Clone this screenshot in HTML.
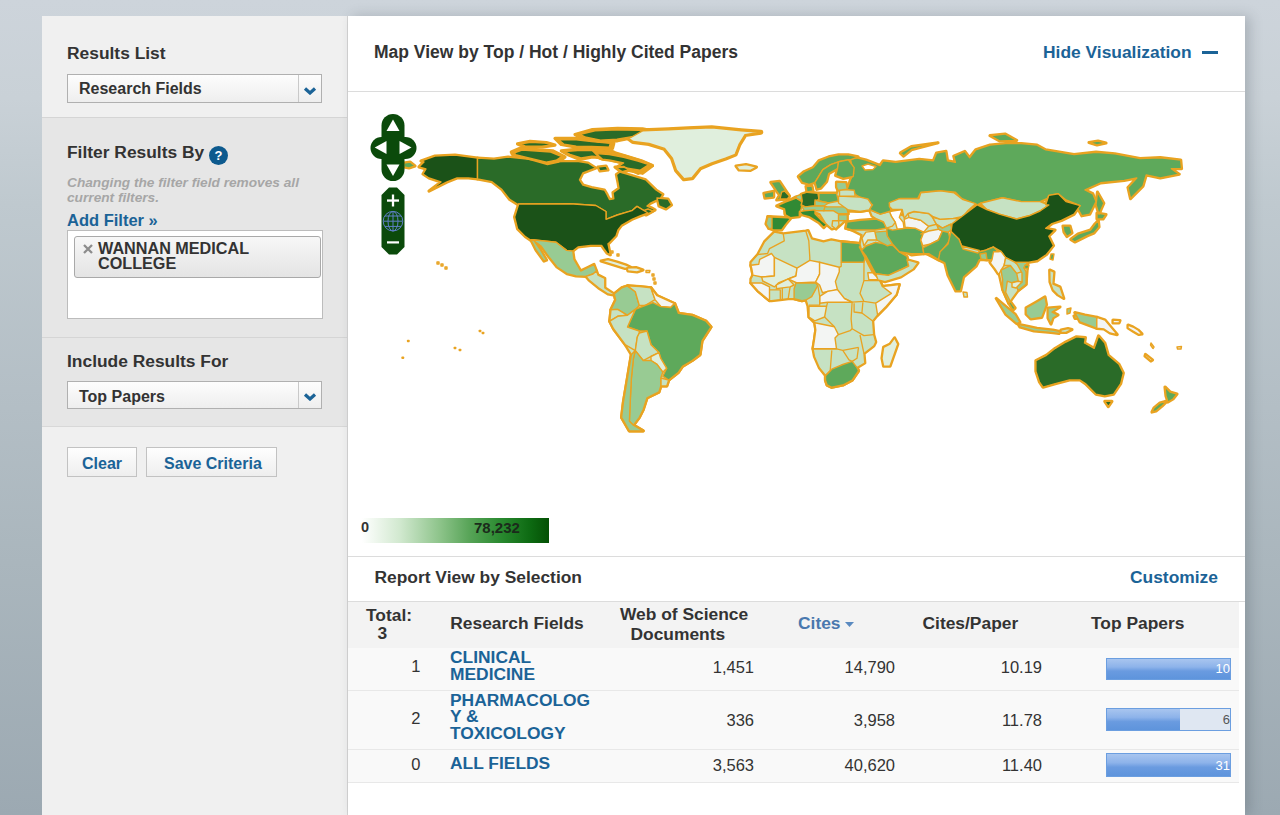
<!DOCTYPE html>
<html><head><meta charset="utf-8">
<style>
*{margin:0;padding:0;box-sizing:border-box}
html,body{width:1280px;height:815px;overflow:hidden}
body{font-family:"Liberation Sans",sans-serif;position:relative;
background:linear-gradient(180deg,#cdd4db 0%,#c9d1d7 12%,#bfc9cf 25%,#b3bec5 50%,#aab6bd 69%,#9ca9b2 100%);}
.t{position:absolute;white-space:nowrap;line-height:1}
.r{position:absolute}
</style></head>
<body>
<div class="r" style="left:42px;top:16px;width:305px;height:799px;background:#f0f0f0"></div>
<div class="r" style="left:42px;top:117px;width:305px;height:220px;background:#e6e6e6;border-top:1px solid #d5d5d5"></div>
<div class="r" style="left:42px;top:337px;width:305px;height:90px;background:#e6e6e6;border-top:1px solid #d5d5d5;border-bottom:1px solid #d8d8d8"></div>
<div class="r" style="left:347px;top:16px;width:1px;height:799px;background:#d4d4d4"></div>
<div class="t" style="left:67px;top:45.27px;font-size:17.4px;font-weight:bold;color:#333;">Results List</div>
<div class="r" style="left:67px;top:74px;width:255px;height:29px;border:1px solid #b0b0b0;background:linear-gradient(#fdfdfd,#eeeeee)"></div>
<div class="r" style="left:298px;top:75px;width:1px;height:27px;background:#c9c9c9"></div>
<div class="t" style="left:79px;top:80.86px;font-size:16px;font-weight:bold;color:#333;">Research Fields</div>
<svg class="r" style="left:303px;top:86.5px" width="14" height="8" viewBox="0 0 14 8"><path d="M2 1.5 L7 6 L12 1.5" fill="none" stroke="#1b6397" stroke-width="3.2"/></svg>
<div class="t" style="left:67px;top:143.77px;font-size:17.4px;font-weight:bold;color:#333;">Filter Results By</div>
<div class="r" style="left:209px;top:146px;width:19px;height:19px;border-radius:50%;background:#0d5a8e;color:#fff;font-size:13px;font-weight:bold;text-align:center;line-height:19px">?</div>
<div class="t" style="left:67px;top:176.00px;font-size:13.7px;font-weight:bold;color:#a6a6a6;font-style:italic">Changing the filter field removes all</div>
<div class="t" style="left:67px;top:191.00px;font-size:13.7px;font-weight:bold;color:#a6a6a6;font-style:italic">current filters.</div>
<div class="t" style="left:67px;top:212.33px;font-size:16.5px;font-weight:bold;color:#1b6397;">Add Filter »</div>
<div class="r" style="left:67px;top:230px;width:256px;height:89px;background:#fff;border:1px solid #bcbcbc"></div>
<div class="r" style="left:74px;top:236px;width:247px;height:42px;border:1px solid #a9a9a9;border-radius:3px;background:linear-gradient(#f7f7f7,#e4e4e4)"></div>
<svg class="r" style="left:82px;top:243px" width="12" height="12"><path d="M2 2 L10 10 M10 2 L2 10" stroke="#8c8c8c" stroke-width="2.3"/></svg>
<div class="t" style="left:98px;top:240.49px;font-size:16.2px;font-weight:bold;color:#333;">WANNAN MEDICAL</div>
<div class="t" style="left:98px;top:255.49px;font-size:16.2px;font-weight:bold;color:#333;">COLLEGE</div>
<div class="t" style="left:67px;top:352.77px;font-size:17.4px;font-weight:bold;color:#333;">Include Results For</div>
<div class="r" style="left:67px;top:381px;width:255px;height:28px;border:1px solid #b0b0b0;background:linear-gradient(#fdfdfd,#eeeeee)"></div>
<div class="r" style="left:298px;top:382px;width:1px;height:26px;background:#c9c9c9"></div>
<div class="t" style="left:79px;top:388.86px;font-size:16px;font-weight:bold;color:#333;">Top Papers</div>
<svg class="r" style="left:303px;top:393.0px" width="14" height="8" viewBox="0 0 14 8"><path d="M2 1.5 L7 6 L12 1.5" fill="none" stroke="#1b6397" stroke-width="3.2"/></svg>
<div class="r" style="left:67px;top:447px;width:70px;height:30px;border:1px solid #c2c2c2;background:linear-gradient(#fefefe,#eeeeee)"></div>
<div class="t" style="left:82px;top:456.26px;font-size:16px;font-weight:bold;color:#1b6397;">Clear</div>
<div class="r" style="left:146px;top:447px;width:131px;height:30px;border:1px solid #c2c2c2;background:linear-gradient(#fefefe,#eeeeee)"></div>
<div class="t" style="left:164px;top:456.26px;font-size:16px;font-weight:bold;color:#1b6397;">Save Criteria</div>
<div class="r" style="left:348px;top:16px;width:897px;height:799px;background:#fff;box-shadow:5px 0 12px rgba(50,60,70,0.22)"></div>
<div class="t" style="left:374px;top:43.89px;font-size:17.5px;font-weight:bold;color:#333;">Map View by Top / Hot / Highly Cited Papers</div>
<div class="t" style="left:1043px;top:43.67px;font-size:17.4px;font-weight:bold;color:#1b6397;">Hide Visualization</div>
<div class="r" style="left:1202px;top:51px;width:16px;height:3px;background:#1b6397"></div>
<div class="r" style="left:348px;top:91px;width:897px;height:1px;background:#dcdcdc"></div>
<div class="r" style="left:348px;top:556px;width:897px;height:1px;background:#dcdcdc"></div>
<div class="t" style="left:374.5px;top:569.07px;font-size:17.4px;font-weight:bold;color:#333;">Report View by Selection</div>
<div class="t" style="left:1130px;top:568.77px;font-size:17.4px;font-weight:bold;color:#1b6397;">Customize</div>
<div class="r" style="left:348px;top:601px;width:897px;height:1px;background:#dcdcdc"></div>
<div class="r" style="left:348px;top:602px;width:891px;height:46px;background:#f3f3f3"></div>
<div class="r" style="left:348px;top:648px;width:891px;height:134px;background:#f9f9f9"></div>
<div class="r" style="left:348px;top:690px;width:891px;height:1px;background:#e8e8e8"></div>
<div class="r" style="left:348px;top:749px;width:891px;height:1px;background:#e8e8e8"></div>
<div class="r" style="left:348px;top:782px;width:891px;height:1px;background:#e8e8e8"></div>
<div class="t" style="left:366px;top:606.77px;font-size:17.4px;font-weight:bold;color:#333;">Total:</div>
<div class="t" style="left:377.5px;top:625.27px;font-size:17.4px;font-weight:bold;color:#333;">3</div>
<div class="t" style="left:450.3px;top:614.87px;font-size:17.4px;font-weight:bold;color:#333;">Research Fields</div>
<div class="t" style="left:620px;top:606.27px;font-size:17.4px;font-weight:bold;color:#333;">Web of Science</div>
<div class="t" style="left:630.5px;top:625.57px;font-size:17.4px;font-weight:bold;color:#333;">Documents</div>
<div class="t" style="left:798px;top:614.57px;font-size:17.4px;font-weight:bold;color:#4a78ae;">Cites</div>
<svg class="r" style="left:845px;top:622px" width="10" height="6"><path d="M0 0 L9 0 L4.5 5Z" fill="#5a8ac0"/></svg>
<div class="t" style="left:922.5px;top:614.57px;font-size:17.4px;font-weight:bold;color:#333;">Cites/Paper</div>
<div class="t" style="left:1091px;top:614.57px;font-size:17.4px;font-weight:bold;color:#333;">Top Papers</div>
<div class="t" style="right:859.5px;top:658.33px;font-size:16.5px;font-weight:normal;color:#333;">1</div>
<div class="t" style="left:450px;top:649.37px;font-size:17.4px;font-weight:bold;color:#1b6397;">CLINICAL</div>
<div class="t" style="left:450px;top:665.67px;font-size:17.4px;font-weight:bold;color:#1b6397;">MEDICINE</div>
<div class="t" style="right:526px;top:659.13px;font-size:16.5px;font-weight:normal;color:#333;">1,451</div>
<div class="t" style="right:385px;top:659.13px;font-size:16.5px;font-weight:normal;color:#333;">14,790</div>
<div class="t" style="right:238px;top:659.13px;font-size:16.5px;font-weight:normal;color:#333;">10.19</div>
<div class="r" style="left:1106px;top:658px;width:125px;height:22px;border:1px solid #6b9ee0;background:#dfe7f2"></div>
<div class="r" style="left:1107px;top:659px;width:123px;height:20px;background:linear-gradient(#a8c5ef 0%,#8db3ea 40%,#6a9be0 60%,#5e94dc 100%)"></div>
<div class="t" style="right:50px;top:662.15px;font-size:13px;font-weight:normal;color:#fff;">10</div>
<div class="t" style="right:859.5px;top:709.63px;font-size:16.5px;font-weight:normal;color:#333;">2</div>
<div class="t" style="left:450px;top:692.47px;font-size:17.4px;font-weight:bold;color:#1b6397;">PHARMACOLOG</div>
<div class="t" style="left:450px;top:708.27px;font-size:17.4px;font-weight:bold;color:#1b6397;">Y &amp;</div>
<div class="t" style="left:450px;top:724.67px;font-size:17.4px;font-weight:bold;color:#1b6397;">TOXICOLOGY</div>
<div class="t" style="right:526px;top:711.53px;font-size:16.5px;font-weight:normal;color:#333;">336</div>
<div class="t" style="right:385px;top:711.53px;font-size:16.5px;font-weight:normal;color:#333;">3,958</div>
<div class="t" style="right:238px;top:711.53px;font-size:16.5px;font-weight:normal;color:#333;">11.78</div>
<div class="r" style="left:1106px;top:708px;width:125px;height:23px;border:1px solid #6b9ee0;background:#dfe7f2"></div>
<div class="r" style="left:1107px;top:709px;width:73px;height:21px;background:linear-gradient(#a8c5ef 0%,#8db3ea 40%,#6a9be0 60%,#5e94dc 100%)"></div>
<div class="t" style="right:50px;top:713.00px;font-size:13px;font-weight:normal;color:#555;">6</div>
<div class="t" style="right:859.5px;top:756.23px;font-size:16.5px;font-weight:normal;color:#333;">0</div>
<div class="t" style="left:450px;top:755.47px;font-size:17.4px;font-weight:bold;color:#1b6397;">ALL FIELDS</div>
<div class="t" style="right:526px;top:756.53px;font-size:16.5px;font-weight:normal;color:#333;">3,563</div>
<div class="t" style="right:385px;top:756.53px;font-size:16.5px;font-weight:normal;color:#333;">40,620</div>
<div class="t" style="right:238px;top:756.53px;font-size:16.5px;font-weight:normal;color:#333;">11.40</div>
<div class="r" style="left:1106px;top:753px;width:125px;height:24px;border:1px solid #6b9ee0;background:#dfe7f2"></div>
<div class="r" style="left:1107px;top:754px;width:123px;height:22px;background:linear-gradient(#a8c5ef 0%,#8db3ea 40%,#6a9be0 60%,#5e94dc 100%)"></div>
<div class="t" style="right:50px;top:758.65px;font-size:13px;font-weight:normal;color:#fff;">31</div>
<div class="r" style="left:362px;top:518px;width:187px;height:25px;background:linear-gradient(90deg,#ffffff 0%,#d2e9d0 20%,#8cc389 42%,#56a356 58%,#2a8a30 74%,#0d6a12 90%,#045004 100%)"></div>
<div class="t" style="left:361px;top:520.33px;font-size:14.5px;font-weight:bold;color:#333;">0</div>
<div class="t" style="left:474px;top:520.00px;font-size:15px;font-weight:bold;color:#1b2b1b;">78,232</div>
<svg class="r" width="1280" height="815" viewBox="0 0 1280 815" style="left:0;top:0"><g fill="#e9a321" stroke="#e9a321" stroke-width="5" stroke-linejoin="round"><path d="M629,138.5 643,130.7 668.5,129.7 688,128.7 711.7,127.8 741,130.7 760.8,132.3 745,134.6 739,144.4 735.2,154.3 725.4,158.2 711.7,163 700,168 692,177.8 684,178.8 676.4,170 672.4,158.2 664.6,148.4 649,143.5 633,141.5Z"/></g><g fill="#e9a321" stroke="#e9a321" stroke-width="3.2" stroke-linejoin="round"><path d="M421.0,161.0 435.0,156.0 455.0,155.0 477.5,158.0 477.5,179.0 468.5,178.0 457.0,178.0 447.0,182.0 439.0,186.0 429.0,191.0 441.0,182.0 429.0,178.0 423.0,174.0 426.0,169.0 419.0,167.0 424.0,162.0Z"/><path d="M404.0,163.0 410.0,162.0 415.0,166.0 409.0,168.0 404.0,167.0Z"/><path d="M477.5,158.0 494.0,159.0 508.0,157.0 527.0,159.0 547.0,162.0 563.0,161.6 578.5,161.6 588.0,163.0 595.8,168.0 582.9,172.9 579.5,179.8 582.9,185.0 591.5,187.5 604.4,190.0 607.0,194.4 609.5,199.5 613.8,198.7 613.0,192.6 619.0,188.4 618.0,182.3 616.4,174.6 620.0,172.0 630.0,175.0 645.6,179.8 656.0,190.0 662.8,194.4 660.2,198.7 655.0,201.0 650.0,203.5 647.0,206.0 651.6,208.0 655.0,210.0 651.6,211.5 648.0,213.0 637.0,206.4 631.9,210.7 617.3,215.0 606.0,219.3 606.0,211.5 595.8,205.5 570.0,203.8 518.7,204.0 517.6,204.3 509.7,199.4 502.0,189.6 492.0,181.7 477.5,179.0Z"/><path d="M598.0,167.0 606.0,166.0 608.0,170.0 600.0,171.0Z"/><path d="M640.0,212.0 648.0,209.0 653.0,211.0 646.0,215.0Z"/><path d="M657.0,198.0 668.0,199.0 671.5,205.0 666.0,209.0 659.0,206.0Z"/><path d="M610.0,151.4 625.6,156.1 641.3,160.8 652.3,165.5 644.5,170.2 638.2,173.4 628.8,168.7 619.3,167.1 624.0,162.4 613.0,157.7Z"/><path d="M511.3,152.0 520.0,148.3 536.3,149.5 552.5,150.8 565.0,157.0 558.8,162.0 547.5,164.5 530.0,159.5 512.5,154.5Z"/><path d="M514.4,152.9 522.1,150.1 536.4,151.0 550.7,152.0 561.7,156.6 556.2,160.3 546.3,162.1 530.9,158.4 515.5,154.7Z"/><path d="M517.5,143.9 530.0,141.4 546.3,142.6 555.0,145.1 542.5,147.0 523.8,146.4Z"/><path d="M519.7,144.0 530.7,142.2 545.0,143.1 552.7,144.9 541.7,146.3 525.2,145.9Z"/><path d="M555.0,138.3 575.0,138.3 592.5,140.8 613.8,143.3 612.5,148.3 592.5,147.6 575.0,147.0 561.3,144.5Z"/><path d="M558.6,139.7 576.2,139.7 591.6,141.5 610.3,143.4 609.2,147.1 591.6,146.5 576.2,146.1 564.1,144.2Z"/><path d="M575.0,134.5 592.5,129.5 617.5,128.3 642.5,128.9 655.0,131.4 636.3,137.0 617.5,140.8 598.8,142.0 582.5,138.3Z"/><path d="M579.6,134.5 595.0,130.8 617.0,129.9 639.0,130.4 650.0,132.2 633.5,136.4 617.0,139.2 600.5,140.1 586.2,137.3Z"/><path d="M561.3,150.8 580.0,148.9 605.0,149.5 613.8,152.0 607.5,158.3 592.5,157.0 580.0,159.5 567.5,154.5Z"/><path d="M564.6,151.6 581.0,150.2 603.0,150.6 610.8,152.5 605.2,157.1 592.0,156.2 581.0,158.0 570.0,154.3Z"/><path d="M592.5,150.8 607.5,152.0 623.8,155.8 640.0,160.8 652.5,165.8 642.5,173.3 630.0,170.8 617.5,168.3 623.8,163.3 608.8,159.5 600.0,158.3Z"/><path d="M596.0,153.6 609.2,154.5 623.6,157.3 637.8,161.0 648.8,164.7 640.0,170.3 629.0,168.4 618.0,166.6 623.6,162.9 610.4,160.1 602.6,159.2Z"/><path d="M615.0,167.0 624.0,166.5 630.0,170.0 622.0,172.5Z"/><path d="M615.9,167.5 623.9,167.2 629.1,169.7 622.1,171.6Z"/><path d="M518.7,204.0 570.0,203.8 595.8,205.5 606.0,211.5 606.0,219.3 617.3,215.0 631.9,210.7 637.0,206.4 648.0,213.0 640.0,216.0 631.9,219.3 621.5,225.3 618.0,230.0 616.0,236.0 609.6,242.6 608.0,243.8 610.3,254.8 607.0,253.0 603.7,248.5 601.6,245.4 590.7,245.4 578.0,247.0 571.8,251.7 566.6,250.4 556.1,242.3 533.0,239.6 531.3,240.6 525.4,236.7 517.6,228.8 514.6,217.0Z"/><path d="M531.0,239.6 556.1,242.3 566.6,250.4 572.8,251.0 574.0,259.3 580.7,271.0 588.6,267.1 594.0,264.5 596.5,271.0 593.0,274.0 586.0,276.4 576.0,276.0 567.0,273.7 557.0,267.0 549.0,257.0 541.0,246.0 537.0,243.0Z"/><path d="M531.0,240.0 534.0,240.5 540.0,249.0 546.5,260.0 544.0,261.0 536.0,250.0Z"/><path d="M586.0,276.4 593.0,274.0 596.5,271.0 598.0,275.0 604.8,278.4 604.8,287.8 614.2,294.0 617.3,295.7 608.0,294.0 598.5,287.8 589.0,280.0Z"/><path d="M601.0,261.0 608.0,259.5 617.0,262.0 626.0,265.0 631.0,267.5 625.0,268.5 617.0,266.0 609.0,263.5Z"/><path d="M627.0,268.0 636.0,267.5 643.0,270.0 637.0,272.0 628.0,271.0Z"/><path d="M629.0,138.5 643.0,130.7 668.5,129.7 688.0,128.7 711.7,127.8 741.0,130.7 760.8,132.3 745.0,134.6 739.0,144.4 735.2,154.3 725.4,158.2 711.7,163.0 700.0,168.0 692.0,177.8 684.0,178.8 676.4,170.0 672.4,158.2 664.6,148.4 649.0,143.5 633.0,141.5Z"/><path d="M736.0,166.0 746.0,164.5 756.5,167.0 750.0,170.5 739.0,170.0Z"/><path d="M614.2,294.0 622.0,287.8 627.5,285.9 651.0,287.9 657.0,295.7 674.6,303.6 678.5,313.4 692.2,315.3 706.0,321.2 711.0,327.0 702.0,340.8 700.0,354.6 692.2,360.5 682.4,366.4 678.5,372.2 668.7,380.0 666.7,386.0 660.8,386.0 658.9,392.0 647.0,397.8 643.2,409.5 639.3,417.4 633.4,425.2 643.2,431.0 629.4,431.0 621.6,417.4 623.5,401.7 627.5,378.0 631.4,354.6 625.5,344.8 613.7,329.0 609.8,321.2 611.0,309.8 615.7,300.0Z"/><path d="M614.2,294.0 622.0,287.8 627.5,285.9 635.3,291.8 639.3,305.5 635.3,309.4 627.5,315.3 617.7,309.4 611.0,309.8 615.7,300.0Z"/><path d="M627.5,285.9 640.0,286.5 651.0,287.9 655.0,299.6 645.0,305.5 639.3,305.5 635.3,291.8Z"/><path d="M651.0,287.9 657.0,295.7 674.6,303.6 670.7,307.5 660.8,306.5 655.0,299.6Z"/><path d="M609.8,321.2 611.0,309.8 617.7,309.4 627.5,315.3 617.7,316.3Z"/><path d="M627.5,327.0 635.3,309.4 645.0,305.5 653.0,302.6 660.8,306.5 670.7,307.5 674.6,303.6 678.5,313.4 692.2,315.3 706.0,321.2 711.0,327.0 702.0,340.8 700.0,354.6 692.2,360.5 682.4,366.4 678.5,372.2 668.7,380.0 662.8,376.2 666.7,368.3 660.8,358.5 658.9,352.6 651.0,344.8 647.0,331.0 639.3,331.0Z"/><path d="M609.8,321.2 617.7,316.3 627.5,315.3 635.3,309.4 627.5,327.0 639.3,331.0 639.3,333.0 637.3,337.0 635.3,350.6 625.5,344.8 613.7,329.0Z"/><path d="M637.3,337.0 639.3,333.0 647.0,331.0 651.0,344.8 658.9,352.6 651.0,356.5 643.2,360.5 635.3,350.6Z"/><path d="M651.0,356.5 658.9,352.6 660.8,358.5 666.7,368.3 662.8,372.2 657.0,364.4 651.0,360.5Z"/><path d="M660.8,378.0 668.7,380.0 666.7,386.0 660.8,386.0Z"/><path d="M635.3,350.6 643.2,360.5 651.0,360.5 657.0,364.4 662.8,372.2 660.8,378.0 660.8,386.0 658.9,392.0 647.0,397.8 643.2,409.5 639.3,417.4 633.4,425.2 629.4,421.3 630.4,397.8 631.4,378.0 633.4,358.5Z"/><path d="M635.3,350.6 633.4,358.5 631.4,378.0 630.4,397.8 629.4,421.3 633.4,425.2 643.2,431.0 629.4,431.0 621.6,417.4 623.5,401.7 627.5,378.0 631.4,354.6Z"/><path d="M774.4,232.0 783.3,233.9 805.8,231.0 808.0,230.5 811.7,238.8 823.5,241.7 831.4,239.8 841.2,241.7 862.5,243.8 859.3,247.0 865.0,258.0 868.8,266.0 872.7,272.8 879.6,279.7 882.5,286.5 899.2,284.6 896.3,294.4 885.5,307.1 877.6,315.0 872.7,320.9 873.7,334.6 875.7,342.0 874.0,345.7 864.0,353.6 864.8,363.0 857.0,367.7 858.5,370.8 852.2,380.2 842.8,385.0 831.8,387.3 827.1,385.0 825.5,380.2 825.5,375.5 819.3,367.7 814.5,356.7 813.0,348.8 814.5,339.4 815.8,330.0 814.8,322.8 809.0,317.0 808.0,306.0 806.0,300.0 801.9,300.6 794.1,298.7 788.2,298.7 780.3,299.6 771.5,300.6 769.5,300.6 757.8,290.8 750.9,283.0 750.9,279.0 752.9,275.1 751.9,269.2 750.9,265.3 750.9,262.3 757.8,254.5 764.6,241.7Z"/><path d="M750.9,265.3 758.7,264.3 759.7,259.4 771.5,253.5 774.4,257.4 774.4,276.0 761.7,277.0 752.9,275.1 751.9,269.2Z"/><path d="M774.4,257.4 797.0,268.2 796.0,276.0 788.2,279.0 778.4,283.0 774.4,286.9 762.7,281.0 761.7,277.0 774.4,276.0Z"/><path d="M797.0,268.2 809.8,260.4 819.6,262.3 819.6,274.1 815.7,282.0 797.0,283.0 788.2,279.0 796.0,276.0Z"/><path d="M819.6,262.3 839.2,267.3 839.3,271.8 835.4,281.6 837.4,289.5 833.3,290.8 827.6,291.4 822.5,292.8 819.6,285.0 815.7,282.0 819.6,274.1Z"/><path d="M776.4,285.0 788.2,279.0 794.1,285.0 790.1,286.9 782.3,287.9 776.4,288.8Z"/><path d="M796.0,283.0 815.7,283.0 817.8,285.5 811.7,296.7 806.0,300.0 801.9,300.6 794.1,298.7 794.1,288.8Z"/><path d="M750.9,283.0 761.7,283.0 769.5,286.9 769.5,300.6 757.8,290.8Z"/><path d="M819.7,296.3 827.6,291.4 837.4,289.5 844.3,298.3 852.1,302.2 827.6,302.2 819.7,303.2Z"/><path d="M809.0,306.2 826.6,306.2 824.6,317.0 814.8,320.9 809.0,317.0Z"/><path d="M814.8,322.8 824.6,324.8 834.4,326.8 838.4,334.6 835.0,337.9 836.5,348.8 813.0,348.8 814.5,339.4 815.8,330.0Z"/><path d="M867.8,272.8 872.7,272.8 879.6,279.7 868.8,279.7Z"/><path d="M882.5,286.5 899.2,284.6 896.3,294.4 885.5,307.1 877.6,315.0 875.7,303.2 891.4,293.4Z"/><path d="M841.2,241.7 862.5,243.8 859.3,247.0 865.0,258.0 864.0,262.3 841.2,262.3Z"/><path d="M825.5,375.5 831.8,369.2 842.8,364.5 852.2,361.4 857.0,367.7 858.5,370.8 852.2,380.2 842.8,385.0 831.8,387.3 827.1,385.0 825.5,380.2Z"/><path d="M894.6,337.9 897.8,344.1 890.0,366.1 883.6,366.1 882.0,358.3 883.6,347.3 890.0,344.1Z"/><path d="M785.0,203.0 796.0,197.0 818.0,193.5 837.0,193.5 839.0,189.0 856.0,189.0 857.0,196.0 868.0,199.0 872.0,205.0 869.0,210.0 860.0,211.5 848.0,211.0 846.0,214.0 845.8,220.0 838.0,227.0 832.0,229.0 826.0,224.0 820.0,214.0 815.0,212.0 803.0,211.0 800.0,216.0 790.0,216.0 785.0,214.0Z"/><path d="M847.0,222.0 880.0,220.5 892.0,220.0 891.0,211.0 903.0,215.8 911.0,212.6 927.0,214.2 942.8,222.0 952.0,223.6 951.0,231.4 948.0,244.0 940.0,251.8 938.5,259.7 926.0,253.4 924.4,253.4 911.8,255.0 902.4,250.2 891.4,244.0 880.4,245.5 875.7,242.4 866.0,246.0 861.6,250.2 860.0,244.0 862.0,235.0 852.0,230.0 845.8,228.3Z"/><path d="M990.0,248.0 1005.0,257.0 1015.0,262.0 1027.7,262.4 1026.0,284.0 1018.0,290.6 1010.0,301.6 1008.8,303.2 1002.6,289.0 999.0,273.0 990.0,262.0Z"/><path d="M861.6,250.2 866.0,246.0 875.7,242.4 893.0,245.5 899.3,251.8 907.1,256.5 908.7,266.0 902.4,269.0 888.3,275.4 875.7,273.8 866.3,256.5Z"/><path d="M875.7,273.8 888.3,275.4 902.4,269.0 908.7,266.0 907.0,259.7 918.0,262.8 913.4,269.0 900.8,277.0 885.0,281.6 878.0,280.0Z"/><path d="M874.7,232.1 886.5,231.1 887.5,236.0 892.4,243.9 887.5,245.8 876.7,240.0Z"/><path d="M865.9,232.1 874.7,231.1 876.7,240.0 867.9,240.0 863.9,245.8 862.0,238.0Z"/><path d="M886.5,228.2 892.4,230.1 905.1,228.2 915.0,228.2 923.8,232.1 920.8,240.0 922.8,247.8 923.8,253.7 911.0,253.7 899.3,251.7 892.4,243.9 887.5,236.0Z"/><path d="M847.0,222.0 860.0,220.3 876.7,219.0 883.6,222.0 886.5,228.2 875.6,230.0 852.0,230.0 845.8,228.3Z"/><path d="M869.3,209.5 880.3,214.2 889.4,211.5 891.4,216.4 895.3,222.3 892.4,226.2 886.5,228.2 883.6,222.0 876.7,219.0 872.0,216.0Z"/><path d="M904.2,219.3 909.0,217.4 920.8,220.3 928.7,226.2 923.8,232.1 915.0,228.2 905.1,227.2Z"/><path d="M908.1,213.5 914.0,211.5 928.7,213.5 932.6,217.4 936.5,224.3 928.7,226.2 920.8,220.3 909.0,217.4Z"/><path d="M920.8,234.0 928.7,231.0 938.5,229.2 942.4,231.1 938.5,240.0 930.7,243.9 922.8,245.8 920.8,240.0 923.8,232.1Z"/><path d="M922.8,247.8 930.7,243.9 938.5,240.0 942.4,231.1 948.3,232.1 950.3,240.0 943.4,248.8 940.5,253.7 938.5,259.6 928.7,253.7 923.8,253.7Z"/><path d="M932.6,217.4 940.5,219.3 953.2,218.4 958.0,219.0 954.0,224.0 950.3,224.3 942.4,228.2 936.5,224.3Z"/><path d="M936.5,224.3 942.4,228.2 950.3,224.3 952.0,229.0 948.3,232.1 942.4,231.1 938.5,229.2Z"/><path d="M850.5,159.3 856.8,157.7 866.0,160.0 880.0,165.5 883.1,160.8 895.7,162.4 919.3,159.3 933.4,160.8 936.5,153.0 946.0,151.4 947.5,160.8 955.4,162.4 953.8,156.1 964.8,151.4 969.5,157.7 975.8,149.8 990.0,145.1 1005.6,143.5 1021.3,143.5 1037.0,145.1 1045.7,149.8 1074.0,154.5 1096.0,152.2 1114.8,153.8 1140.0,158.5 1160.3,157.7 1180.7,160.0 1181.5,168.7 1171.3,168.7 1179.2,174.2 1160.3,178.0 1146.2,175.0 1143.0,186.0 1130.5,198.5 1128.0,187.5 1136.8,178.0 1124.2,180.4 1100.7,182.8 1085.0,189.9 1092.8,193.8 1096.0,201.6 1089.7,214.2 1081.8,215.8 1077.0,207.1 1080.2,205.6 1066.0,200.0 1058.3,193.8 1048.8,195.4 1047.3,198.5 1040.0,201.6 1021.3,201.6 1002.5,197.7 980.5,203.2 977.3,204.8 961.6,198.5 955.4,192.2 939.7,190.7 920.8,192.2 917.7,198.5 900.4,198.5 889.4,203.2 891.0,211.0 880.3,214.2 869.3,209.5 872.5,204.8 856.8,195.4 847.3,189.0 850.5,179.7 853.6,173.4Z"/><path d="M900.4,153.0 911.4,146.7 938.0,142.8 911.4,149.8 903.6,156.1Z"/><path d="M990.0,135.7 1005.0,134.0 1016.6,140.4 1000.0,141.0Z"/><path d="M1089.0,142.5 1098.0,141.0 1106.0,143.0 1097.0,145.0Z"/><path d="M889.4,202.7 899.3,198.7 918.9,198.7 920.8,192.9 940.5,190.9 954.2,192.9 963.0,199.7 975.8,203.6 968.0,210.5 963.0,216.4 953.2,218.4 940.5,219.3 932.6,216.4 928.7,213.5 914.0,211.5 908.1,213.5 904.2,218.4 902.2,209.5 892.4,209.5 889.4,206.6Z"/><path d="M980.5,203.2 1002.5,197.7 1021.3,201.6 1040.0,201.6 1048.8,205.0 1040.0,211.0 1029.0,215.8 1016.6,219.0 999.3,214.2 986.8,209.5Z"/><path d="M952.2,223.6 964.8,214.2 977.3,204.8 986.8,209.5 999.3,214.2 1016.6,219.0 1029.0,215.8 1040.0,211.0 1048.8,205.0 1045.7,204.8 1048.8,195.4 1058.3,193.8 1066.0,201.6 1080.2,205.6 1074.0,214.2 1061.4,220.5 1052.0,223.6 1045.7,228.3 1055.0,230.0 1048.8,236.2 1053.5,245.6 1046.5,254.5 1037.1,260.8 1027.7,262.4 1015.1,262.4 1005.7,257.7 1001.0,251.4 993.5,247.0 985.6,250.2 979.3,251.8 962.0,247.0 959.0,239.3 951.0,231.4Z"/><path d="M951.0,231.4 959.0,239.3 962.0,247.0 979.3,251.8 985.6,250.2 993.5,247.0 998.2,251.8 992.0,259.7 979.3,259.7 976.2,266.0 963.6,277.0 960.5,291.0 955.8,291.0 948.0,275.4 944.8,262.8 938.5,259.7 940.0,251.8 948.0,244.0Z"/><path d="M962.0,246.0 979.3,250.5 978.0,253.0 963.0,249.0Z"/><path d="M980.0,254.0 986.0,253.0 987.0,260.0 981.0,259.0Z"/><path d="M993.5,251.8 998.2,251.8 1001.0,251.4 1005.7,257.7 1004.1,265.5 1001.0,270.2 999.4,273.4 998.2,273.8 995.0,269.0 990.3,262.8 992.0,259.7Z"/><path d="M1001.0,270.2 1010.4,265.5 1016.7,273.4 1018.3,281.2 1012.0,282.8 1007.3,281.2 1005.7,292.2 1010.4,301.6 1008.8,303.2 1002.6,289.0 1002.6,279.7Z"/><path d="M1005.7,257.7 1015.1,262.4 1017.0,264.0 1024.0,271.0 1016.7,273.4 1010.4,265.5 1004.1,265.5Z"/><path d="M1015.1,262.4 1027.7,262.4 1024.0,268.0 1026.1,271.8 1026.1,284.4 1018.3,290.6 1016.0,286.0 1022.0,282.0 1022.0,273.0 1017.0,264.0Z"/><path d="M1012.0,282.8 1018.3,281.2 1022.0,282.0 1016.0,288.0 1012.0,287.0Z"/><path d="M1008.8,303.2 1010.4,301.6 1015.1,308.0 1013.0,310.0Z"/><path d="M996.3,298.5 1005.7,306.4 1015.1,314.2 1019.8,322.0 1016.7,323.6 1005.7,314.2Z"/><path d="M1018.3,324.4 1037.0,328.3 1052.8,330.0 1060.0,331.5 1059.0,333.5 1051.0,332.5 1034.0,331.0 1020.0,327.0Z"/><path d="M1061.0,330.0 1068.0,328.5 1072.0,329.5 1066.0,332.5 1061.0,332.5Z"/><path d="M1074.0,316.0 1082.0,315.5 1083.0,318.0 1075.0,318.5Z"/><path d="M1128.0,325.0 1133.0,327.0 1138.0,330.0 1142.0,334.0 1139.0,334.5 1133.0,331.0 1128.0,328.0Z"/><path d="M1113.0,320.0 1120.0,320.5 1119.0,323.0 1113.0,323.0Z"/><path d="M1145.5,354.5 1152.5,360.0 1151.0,361.0 1145.0,356.0Z"/><path d="M1026.1,308.0 1037.1,301.6 1045.0,297.0 1046.5,304.8 1041.8,317.3 1030.8,319.0 1026.1,314.2Z"/><path d="M1048.0,308.0 1060.0,307.0 1052.0,312.0 1058.0,315.0 1053.0,318.0 1051.0,324.0 1048.0,318.0Z"/><path d="M1049.7,270.0 1054.0,272.0 1053.0,284.0 1060.0,287.0 1063.8,298.5 1058.0,295.0 1053.0,290.0 1050.0,282.0Z"/><path d="M1074.8,312.6 1085.0,315.0 1096.8,317.3 1096.8,328.3 1088.0,325.0 1080.0,322.0Z"/><path d="M1096.8,317.3 1105.0,320.0 1110.0,326.0 1117.2,334.6 1110.0,333.0 1104.0,329.0 1096.8,328.3Z"/><path d="M1070.8,239.3 1078.0,234.1 1090.5,230.0 1095.0,224.0 1098.3,220.5 1099.0,227.0 1094.0,233.0 1087.3,235.7 1074.8,242.0Z"/><path d="M1097.0,213.0 1106.0,214.5 1103.0,219.0 1097.0,219.0Z"/><path d="M1063.0,226.0 1070.0,226.0 1072.0,233.0 1067.0,236.5 1064.0,232.0Z"/><path d="M1097.5,192.2 1103.8,203.2 1099.0,214.2 1096.0,204.8Z"/><path d="M1035.9,360.6 1046.5,355.3 1055.3,348.3 1066.0,342.0 1076.5,336.8 1085.4,337.7 1084.5,343.0 1094.2,348.3 1098.6,335.9 1104.8,343.0 1108.3,355.3 1118.9,364.2 1123.3,373.0 1120.7,383.6 1113.6,394.2 1104.8,396.0 1096.0,394.2 1088.9,387.1 1085.4,383.6 1080.0,380.0 1069.5,380.0 1055.3,383.6 1043.0,387.1 1039.4,381.8 1035.9,371.2Z"/><path d="M1104.8,401.3 1111.9,401.3 1108.3,406.6Z"/><path d="M1165.0,387.0 1170.0,392.0 1177.0,394.0 1173.0,399.0 1168.0,402.0 1166.0,396.0Z"/><path d="M1167.0,401.0 1162.0,406.0 1156.0,411.0 1152.0,412.0 1154.0,408.0 1160.0,403.0Z"/><path d="M798.3,176.5 804.2,171.6 813.0,167.7 818.9,160.8 828.7,156.9 838.5,154.9 848.3,154.9 858.1,156.9 850.3,159.8 838.5,161.8 830.7,164.7 822.8,169.6 815.0,182.4 809.1,184.3 802.2,182.4Z"/><path d="M815.0,182.4 822.8,169.6 830.7,164.7 838.5,161.8 837.5,168.6 828.7,173.6 826.7,181.4 820.8,188.3 816.9,189.3Z"/><path d="M838.5,161.8 848.3,159.8 854.2,167.7 853.2,176.5 843.4,178.5 835.6,175.5 837.5,168.6Z"/><path d="M806.0,186.5 812.0,186.0 813.0,191.0 807.0,192.0Z"/><path d="M770.8,182.4 779.6,181.4 783.6,187.3 789.4,196.1 787.5,199.0 776.7,200.0 779.6,195.1 776.7,191.2Z"/><path d="M781.6,192.2 784.5,191.0 789.4,196.1 787.5,199.0 780.0,199.0Z"/><path d="M763.9,193.2 773.7,191.2 773.7,197.1 764.9,198.1Z"/><path d="M776.7,206.0 785.5,202.0 796.3,198.1 802.2,202.0 801.2,208.9 799.3,212.8 799.3,216.7 790.4,217.7 785.5,214.8 784.5,208.9Z"/><path d="M801.2,194.2 807.1,192.2 817.9,193.2 818.9,199.0 815.0,202.0 815.0,205.9 805.1,206.9 801.2,205.0 802.2,201.0Z"/><path d="M818.9,193.2 836.5,193.2 838.5,201.0 828.7,203.0 818.9,201.0Z"/><path d="M815.0,200.0 818.9,201.0 828.7,203.0 823.8,206.0 817.0,206.0 815.0,205.9Z"/><path d="M801.2,205.0 805.1,206.9 815.0,205.9 817.0,206.0 823.8,206.0 826.7,206.9 823.8,210.8 804.2,210.8Z"/><path d="M799.3,211.8 804.2,210.8 815.0,209.9 815.0,213.8 821.8,220.7 826.7,224.6 823.8,227.5 818.9,222.6 809.1,216.7 802.2,214.8Z"/><path d="M767.9,216.7 787.5,217.7 790.4,218.7 785.5,224.6 781.6,230.0 773.5,230.0 768.8,228.3Z"/><path d="M767.9,216.7 772.0,217.3 772.0,228.5 768.8,228.3 766.0,224.0Z"/><path d="M824.8,206.9 833.6,206.9 834.6,206.9 846.4,206.9 848.3,213.8 838.5,213.8 833.6,210.8 823.8,210.8Z"/><path d="M838.5,196.1 860.0,197.1 868.0,199.0 872.0,205.0 869.0,210.0 860.0,211.5 848.3,210.0 838.5,203.0Z"/><path d="M839.5,189.3 854.2,190.2 855.2,196.1 839.5,196.1Z"/><path d="M836.5,182.0 846.0,182.5 847.3,189.3 838.0,190.5 836.5,187.0Z"/><path d="M838.5,214.8 847.3,214.8 847.3,220.7 838.5,220.7Z"/><path d="M832.6,220.7 838.5,220.7 839.0,225.0 836.0,229.0 832.0,226.0Z"/></g><g stroke="#e9a321" stroke-width="1.4" stroke-linejoin="round"><path fill="#1b5218" d="M421.0,161.0 435.0,156.0 455.0,155.0 477.5,158.0 477.5,179.0 468.5,178.0 457.0,178.0 447.0,182.0 439.0,186.0 429.0,191.0 441.0,182.0 429.0,178.0 423.0,174.0 426.0,169.0 419.0,167.0 424.0,162.0Z"/><path fill="#5ea95b" d="M404.0,163.0 410.0,162.0 415.0,166.0 409.0,168.0 404.0,167.0Z"/><path fill="#2a6b28" d="M477.5,158.0 494.0,159.0 508.0,157.0 527.0,159.0 547.0,162.0 563.0,161.6 578.5,161.6 588.0,163.0 595.8,168.0 582.9,172.9 579.5,179.8 582.9,185.0 591.5,187.5 604.4,190.0 607.0,194.4 609.5,199.5 613.8,198.7 613.0,192.6 619.0,188.4 618.0,182.3 616.4,174.6 620.0,172.0 630.0,175.0 645.6,179.8 656.0,190.0 662.8,194.4 660.2,198.7 655.0,201.0 650.0,203.5 647.0,206.0 651.6,208.0 655.0,210.0 651.6,211.5 648.0,213.0 637.0,206.4 631.9,210.7 617.3,215.0 606.0,219.3 606.0,211.5 595.8,205.5 570.0,203.8 518.7,204.0 517.6,204.3 509.7,199.4 502.0,189.6 492.0,181.7 477.5,179.0Z"/><path fill="#2a6b28" d="M598.0,167.0 606.0,166.0 608.0,170.0 600.0,171.0Z"/><path fill="#2a6b28" d="M640.0,212.0 648.0,209.0 653.0,211.0 646.0,215.0Z"/><path fill="#2a6b28" d="M657.0,198.0 668.0,199.0 671.5,205.0 666.0,209.0 659.0,206.0Z"/><path fill="#2a6b28" d="M610.0,151.4 625.6,156.1 641.3,160.8 652.3,165.5 644.5,170.2 638.2,173.4 628.8,168.7 619.3,167.1 624.0,162.4 613.0,157.7Z"/><path fill="#e8a21f" d="M511.3,152.0 520.0,148.3 536.3,149.5 552.5,150.8 565.0,157.0 558.8,162.0 547.5,164.5 530.0,159.5 512.5,154.5Z"/><path fill="#2a6b28" d="M514.4,152.9 522.1,150.1 536.4,151.0 550.7,152.0 561.7,156.6 556.2,160.3 546.3,162.1 530.9,158.4 515.5,154.7Z"/><path fill="#e8a21f" d="M517.5,143.9 530.0,141.4 546.3,142.6 555.0,145.1 542.5,147.0 523.8,146.4Z"/><path fill="#2a6b28" d="M519.7,144.0 530.7,142.2 545.0,143.1 552.7,144.9 541.7,146.3 525.2,145.9Z"/><path fill="#e8a21f" d="M555.0,138.3 575.0,138.3 592.5,140.8 613.8,143.3 612.5,148.3 592.5,147.6 575.0,147.0 561.3,144.5Z"/><path fill="#2a6b28" d="M558.6,139.7 576.2,139.7 591.6,141.5 610.3,143.4 609.2,147.1 591.6,146.5 576.2,146.1 564.1,144.2Z"/><path fill="#e8a21f" d="M575.0,134.5 592.5,129.5 617.5,128.3 642.5,128.9 655.0,131.4 636.3,137.0 617.5,140.8 598.8,142.0 582.5,138.3Z"/><path fill="#2a6b28" d="M579.6,134.5 595.0,130.8 617.0,129.9 639.0,130.4 650.0,132.2 633.5,136.4 617.0,139.2 600.5,140.1 586.2,137.3Z"/><path fill="#e8a21f" d="M561.3,150.8 580.0,148.9 605.0,149.5 613.8,152.0 607.5,158.3 592.5,157.0 580.0,159.5 567.5,154.5Z"/><path fill="#2a6b28" d="M564.6,151.6 581.0,150.2 603.0,150.6 610.8,152.5 605.2,157.1 592.0,156.2 581.0,158.0 570.0,154.3Z"/><path fill="#e8a21f" d="M592.5,150.8 607.5,152.0 623.8,155.8 640.0,160.8 652.5,165.8 642.5,173.3 630.0,170.8 617.5,168.3 623.8,163.3 608.8,159.5 600.0,158.3Z"/><path fill="#2a6b28" d="M596.0,153.6 609.2,154.5 623.6,157.3 637.8,161.0 648.8,164.7 640.0,170.3 629.0,168.4 618.0,166.6 623.6,162.9 610.4,160.1 602.6,159.2Z"/><path fill="#e8a21f" d="M615.0,167.0 624.0,166.5 630.0,170.0 622.0,172.5Z"/><path fill="#2a6b28" d="M615.9,167.5 623.9,167.2 629.1,169.7 622.1,171.6Z"/><path fill="#1b5218" d="M518.7,204.0 570.0,203.8 595.8,205.5 606.0,211.5 606.0,219.3 617.3,215.0 631.9,210.7 637.0,206.4 648.0,213.0 640.0,216.0 631.9,219.3 621.5,225.3 618.0,230.0 616.0,236.0 609.6,242.6 608.0,243.8 610.3,254.8 607.0,253.0 603.7,248.5 601.6,245.4 590.7,245.4 578.0,247.0 571.8,251.7 566.6,250.4 556.1,242.3 533.0,239.6 531.3,240.6 525.4,236.7 517.6,228.8 514.6,217.0Z"/><path fill="#98cb93" d="M531.0,239.6 556.1,242.3 566.6,250.4 572.8,251.0 574.0,259.3 580.7,271.0 588.6,267.1 594.0,264.5 596.5,271.0 593.0,274.0 586.0,276.4 576.0,276.0 567.0,273.7 557.0,267.0 549.0,257.0 541.0,246.0 537.0,243.0Z"/><path fill="#98cb93" d="M531.0,240.0 534.0,240.5 540.0,249.0 546.5,260.0 544.0,261.0 536.0,250.0Z"/><path fill="#c6e2c3" d="M586.0,276.4 593.0,274.0 596.5,271.0 598.0,275.0 604.8,278.4 604.8,287.8 614.2,294.0 617.3,295.7 608.0,294.0 598.5,287.8 589.0,280.0Z"/><path fill="#e0efdd" d="M601.0,261.0 608.0,259.5 617.0,262.0 626.0,265.0 631.0,267.5 625.0,268.5 617.0,266.0 609.0,263.5Z"/><path fill="#e0efdd" d="M627.0,268.0 636.0,267.5 643.0,270.0 637.0,272.0 628.0,271.0Z"/><path fill="#e0efdd" d="M646.0,270.5 650.0,270.5 649.5,272.5 646.0,272.5Z"/><path fill="#e0efdd" d="M652.0,274.0 654.0,274.0 654.0,276.0 652.0,276.0Z"/><path fill="#e0efdd" d="M653.0,278.0 655.0,278.0 655.0,280.0 653.0,280.0Z"/><path fill="#e0efdd" d="M654.0,282.0 656.0,282.0 656.0,284.0 654.0,284.0Z"/><path fill="#e0efdd" d="M437.0,262.0 439.0,262.0 439.0,264.0 437.0,264.0Z"/><path fill="#e0efdd" d="M441.0,264.0 443.0,264.0 443.0,266.0 441.0,266.0Z"/><path fill="#e0efdd" d="M445.0,267.0 447.0,267.0 447.0,269.0 445.0,269.0Z"/><path fill="#e0efdd" d="M611.0,251.0 613.0,251.0 613.0,253.0 611.0,253.0Z"/><path fill="#e0efdd" d="M617.0,254.0 619.0,254.0 619.0,256.0 617.0,256.0Z"/><path fill="#e0efdd" d="M629.0,138.5 643.0,130.7 668.5,129.7 688.0,128.7 711.7,127.8 741.0,130.7 760.8,132.3 745.0,134.6 739.0,144.4 735.2,154.3 725.4,158.2 711.7,163.0 700.0,168.0 692.0,177.8 684.0,178.8 676.4,170.0 672.4,158.2 664.6,148.4 649.0,143.5 633.0,141.5Z"/><path fill="#e0efdd" d="M736.0,166.0 746.0,164.5 756.5,167.0 750.0,170.5 739.0,170.0Z"/><path fill="#c6e2c3" d="M614.2,294.0 622.0,287.8 627.5,285.9 651.0,287.9 657.0,295.7 674.6,303.6 678.5,313.4 692.2,315.3 706.0,321.2 711.0,327.0 702.0,340.8 700.0,354.6 692.2,360.5 682.4,366.4 678.5,372.2 668.7,380.0 666.7,386.0 660.8,386.0 658.9,392.0 647.0,397.8 643.2,409.5 639.3,417.4 633.4,425.2 643.2,431.0 629.4,431.0 621.6,417.4 623.5,401.7 627.5,378.0 631.4,354.6 625.5,344.8 613.7,329.0 609.8,321.2 611.0,309.8 615.7,300.0Z"/><path fill="#98cb93" d="M614.2,294.0 622.0,287.8 627.5,285.9 635.3,291.8 639.3,305.5 635.3,309.4 627.5,315.3 617.7,309.4 611.0,309.8 615.7,300.0Z"/><path fill="#c6e2c3" d="M627.5,285.9 640.0,286.5 651.0,287.9 655.0,299.6 645.0,305.5 639.3,305.5 635.3,291.8Z"/><path fill="#f3f5f3" d="M651.0,287.9 657.0,295.7 674.6,303.6 670.7,307.5 660.8,306.5 655.0,299.6Z"/><path fill="#c6e2c3" d="M609.8,321.2 611.0,309.8 617.7,309.4 627.5,315.3 617.7,316.3Z"/><path fill="#5ea95b" d="M627.5,327.0 635.3,309.4 645.0,305.5 653.0,302.6 660.8,306.5 670.7,307.5 674.6,303.6 678.5,313.4 692.2,315.3 706.0,321.2 711.0,327.0 702.0,340.8 700.0,354.6 692.2,360.5 682.4,366.4 678.5,372.2 668.7,380.0 662.8,376.2 666.7,368.3 660.8,358.5 658.9,352.6 651.0,344.8 647.0,331.0 639.3,331.0Z"/><path fill="#c6e2c3" d="M609.8,321.2 617.7,316.3 627.5,315.3 635.3,309.4 627.5,327.0 639.3,331.0 639.3,333.0 637.3,337.0 635.3,350.6 625.5,344.8 613.7,329.0Z"/><path fill="#c6e2c3" d="M637.3,337.0 639.3,333.0 647.0,331.0 651.0,344.8 658.9,352.6 651.0,356.5 643.2,360.5 635.3,350.6Z"/><path fill="#e0efdd" d="M651.0,356.5 658.9,352.6 660.8,358.5 666.7,368.3 662.8,372.2 657.0,364.4 651.0,360.5Z"/><path fill="#c6e2c3" d="M660.8,378.0 668.7,380.0 666.7,386.0 660.8,386.0Z"/><path fill="#98cb93" d="M635.3,350.6 643.2,360.5 651.0,360.5 657.0,364.4 662.8,372.2 660.8,378.0 660.8,386.0 658.9,392.0 647.0,397.8 643.2,409.5 639.3,417.4 633.4,425.2 629.4,421.3 630.4,397.8 631.4,378.0 633.4,358.5Z"/><path fill="#98cb93" d="M635.3,350.6 633.4,358.5 631.4,378.0 630.4,397.8 629.4,421.3 633.4,425.2 643.2,431.0 629.4,431.0 621.6,417.4 623.5,401.7 627.5,378.0 631.4,354.6Z"/><path fill="#c6e2c3" d="M774.4,232.0 783.3,233.9 805.8,231.0 808.0,230.5 811.7,238.8 823.5,241.7 831.4,239.8 841.2,241.7 862.5,243.8 859.3,247.0 865.0,258.0 868.8,266.0 872.7,272.8 879.6,279.7 882.5,286.5 899.2,284.6 896.3,294.4 885.5,307.1 877.6,315.0 872.7,320.9 873.7,334.6 875.7,342.0 874.0,345.7 864.0,353.6 864.8,363.0 857.0,367.7 858.5,370.8 852.2,380.2 842.8,385.0 831.8,387.3 827.1,385.0 825.5,380.2 825.5,375.5 819.3,367.7 814.5,356.7 813.0,348.8 814.5,339.4 815.8,330.0 814.8,322.8 809.0,317.0 808.0,306.0 806.0,300.0 801.9,300.6 794.1,298.7 788.2,298.7 780.3,299.6 771.5,300.6 769.5,300.6 757.8,290.8 750.9,283.0 750.9,279.0 752.9,275.1 751.9,269.2 750.9,265.3 750.9,262.3 757.8,254.5 764.6,241.7Z"/><path fill="#f3f5f3" d="M750.9,265.3 758.7,264.3 759.7,259.4 771.5,253.5 774.4,257.4 774.4,276.0 761.7,277.0 752.9,275.1 751.9,269.2Z"/><path fill="#e0efdd" d="M774.4,257.4 797.0,268.2 796.0,276.0 788.2,279.0 778.4,283.0 774.4,286.9 762.7,281.0 761.7,277.0 774.4,276.0Z"/><path fill="#f3f5f3" d="M797.0,268.2 809.8,260.4 819.6,262.3 819.6,274.1 815.7,282.0 797.0,283.0 788.2,279.0 796.0,276.0Z"/><path fill="#f3f5f3" d="M819.6,262.3 839.2,267.3 839.3,271.8 835.4,281.6 837.4,289.5 833.3,290.8 827.6,291.4 822.5,292.8 819.6,285.0 815.7,282.0 819.6,274.1Z"/><path fill="#e0efdd" d="M776.4,285.0 788.2,279.0 794.1,285.0 790.1,286.9 782.3,287.9 776.4,288.8Z"/><path fill="#98cb93" d="M796.0,283.0 815.7,283.0 817.8,285.5 811.7,296.7 806.0,300.0 801.9,300.6 794.1,298.7 794.1,288.8Z"/><path fill="#f3f5f3" d="M750.9,283.0 761.7,283.0 769.5,286.9 769.5,300.6 757.8,290.8Z"/><path fill="#f3f5f3" d="M819.7,296.3 827.6,291.4 837.4,289.5 844.3,298.3 852.1,302.2 827.6,302.2 819.7,303.2Z"/><path fill="#e0efdd" d="M809.0,306.2 826.6,306.2 824.6,317.0 814.8,320.9 809.0,317.0Z"/><path fill="#f3f5f3" d="M814.8,322.8 824.6,324.8 834.4,326.8 838.4,334.6 835.0,337.9 836.5,348.8 813.0,348.8 814.5,339.4 815.8,330.0Z"/><path fill="#f3f5f3" d="M867.8,272.8 872.7,272.8 879.6,279.7 868.8,279.7Z"/><path fill="#f3f5f3" d="M882.5,286.5 899.2,284.6 896.3,294.4 885.5,307.1 877.6,315.0 875.7,303.2 891.4,293.4Z"/><path fill="#5ea95b" d="M841.2,241.7 862.5,243.8 859.3,247.0 865.0,258.0 864.0,262.3 841.2,262.3Z"/><path fill="#5ea95b" d="M825.5,375.5 831.8,369.2 842.8,364.5 852.2,361.4 857.0,367.7 858.5,370.8 852.2,380.2 842.8,385.0 831.8,387.3 827.1,385.0 825.5,380.2Z"/><path fill="#e0efdd" d="M894.6,337.9 897.8,344.1 890.0,366.1 883.6,366.1 882.0,358.3 883.6,347.3 890.0,344.1Z"/><path fill="#c6e2c3" d="M785.0,203.0 796.0,197.0 818.0,193.5 837.0,193.5 839.0,189.0 856.0,189.0 857.0,196.0 868.0,199.0 872.0,205.0 869.0,210.0 860.0,211.5 848.0,211.0 846.0,214.0 845.8,220.0 838.0,227.0 832.0,229.0 826.0,224.0 820.0,214.0 815.0,212.0 803.0,211.0 800.0,216.0 790.0,216.0 785.0,214.0Z"/><path fill="#c6e2c3" d="M847.0,222.0 880.0,220.5 892.0,220.0 891.0,211.0 903.0,215.8 911.0,212.6 927.0,214.2 942.8,222.0 952.0,223.6 951.0,231.4 948.0,244.0 940.0,251.8 938.5,259.7 926.0,253.4 924.4,253.4 911.8,255.0 902.4,250.2 891.4,244.0 880.4,245.5 875.7,242.4 866.0,246.0 861.6,250.2 860.0,244.0 862.0,235.0 852.0,230.0 845.8,228.3Z"/><path fill="#c6e2c3" d="M990.0,248.0 1005.0,257.0 1015.0,262.0 1027.7,262.4 1026.0,284.0 1018.0,290.6 1010.0,301.6 1008.8,303.2 1002.6,289.0 999.0,273.0 990.0,262.0Z"/><path fill="#ffffff" d="M889.4,211.5 902.2,209.5 899.3,217.4 903.2,222.3 904.2,229.2 897.3,229.2 895.3,222.3 891.4,216.4Z"/><path fill="#5ea95b" d="M861.6,250.2 866.0,246.0 875.7,242.4 893.0,245.5 899.3,251.8 907.1,256.5 908.7,266.0 902.4,269.0 888.3,275.4 875.7,273.8 866.3,256.5Z"/><path fill="#c6e2c3" d="M875.7,273.8 888.3,275.4 902.4,269.0 908.7,266.0 907.0,259.7 918.0,262.8 913.4,269.0 900.8,277.0 885.0,281.6 878.0,280.0Z"/><path fill="#98cb93" d="M874.7,232.1 886.5,231.1 887.5,236.0 892.4,243.9 887.5,245.8 876.7,240.0Z"/><path fill="#e0efdd" d="M865.9,232.1 874.7,231.1 876.7,240.0 867.9,240.0 863.9,245.8 862.0,238.0Z"/><path fill="#5ea95b" d="M886.5,228.2 892.4,230.1 905.1,228.2 915.0,228.2 923.8,232.1 920.8,240.0 922.8,247.8 923.8,253.7 911.0,253.7 899.3,251.7 892.4,243.9 887.5,236.0Z"/><path fill="#5ea95b" d="M847.0,222.0 860.0,220.3 876.7,219.0 883.6,222.0 886.5,228.2 875.6,230.0 852.0,230.0 845.8,228.3Z"/><path fill="#c6e2c3" d="M869.3,209.5 880.3,214.2 889.4,211.5 891.4,216.4 895.3,222.3 892.4,226.2 886.5,228.2 883.6,222.0 876.7,219.0 872.0,216.0Z"/><path fill="#f3f5f3" d="M904.2,219.3 909.0,217.4 920.8,220.3 928.7,226.2 923.8,232.1 915.0,228.2 905.1,227.2Z"/><path fill="#c6e2c3" d="M908.1,213.5 914.0,211.5 928.7,213.5 932.6,217.4 936.5,224.3 928.7,226.2 920.8,220.3 909.0,217.4Z"/><path fill="#f3f5f3" d="M920.8,234.0 928.7,231.0 938.5,229.2 942.4,231.1 938.5,240.0 930.7,243.9 922.8,245.8 920.8,240.0 923.8,232.1Z"/><path fill="#5ea95b" d="M922.8,247.8 930.7,243.9 938.5,240.0 942.4,231.1 948.3,232.1 950.3,240.0 943.4,248.8 940.5,253.7 938.5,259.6 928.7,253.7 923.8,253.7Z"/><path fill="#c6e2c3" d="M932.6,217.4 940.5,219.3 953.2,218.4 958.0,219.0 954.0,224.0 950.3,224.3 942.4,228.2 936.5,224.3Z"/><path fill="#98cb93" d="M936.5,224.3 942.4,228.2 950.3,224.3 952.0,229.0 948.3,232.1 942.4,231.1 938.5,229.2Z"/><path fill="#5ea95b" d="M850.5,159.3 856.8,157.7 866.0,160.0 880.0,165.5 883.1,160.8 895.7,162.4 919.3,159.3 933.4,160.8 936.5,153.0 946.0,151.4 947.5,160.8 955.4,162.4 953.8,156.1 964.8,151.4 969.5,157.7 975.8,149.8 990.0,145.1 1005.6,143.5 1021.3,143.5 1037.0,145.1 1045.7,149.8 1074.0,154.5 1096.0,152.2 1114.8,153.8 1140.0,158.5 1160.3,157.7 1180.7,160.0 1181.5,168.7 1171.3,168.7 1179.2,174.2 1160.3,178.0 1146.2,175.0 1143.0,186.0 1130.5,198.5 1128.0,187.5 1136.8,178.0 1124.2,180.4 1100.7,182.8 1085.0,189.9 1092.8,193.8 1096.0,201.6 1089.7,214.2 1081.8,215.8 1077.0,207.1 1080.2,205.6 1066.0,200.0 1058.3,193.8 1048.8,195.4 1047.3,198.5 1040.0,201.6 1021.3,201.6 1002.5,197.7 980.5,203.2 977.3,204.8 961.6,198.5 955.4,192.2 939.7,190.7 920.8,192.2 917.7,198.5 900.4,198.5 889.4,203.2 891.0,211.0 880.3,214.2 869.3,209.5 872.5,204.8 856.8,195.4 847.3,189.0 850.5,179.7 853.6,173.4Z"/><path fill="#5ea95b" d="M900.4,153.0 911.4,146.7 938.0,142.8 911.4,149.8 903.6,156.1Z"/><path fill="#ffffff" d="M862.0,166.0 868.0,164.0 876.0,166.5 873.0,169.5 865.0,170.0Z"/><path fill="#5ea95b" d="M990.0,135.7 1005.0,134.0 1016.6,140.4 1000.0,141.0Z"/><path fill="#5ea95b" d="M1089.0,142.5 1098.0,141.0 1106.0,143.0 1097.0,145.0Z"/><path fill="#c6e2c3" d="M889.4,202.7 899.3,198.7 918.9,198.7 920.8,192.9 940.5,190.9 954.2,192.9 963.0,199.7 975.8,203.6 968.0,210.5 963.0,216.4 953.2,218.4 940.5,219.3 932.6,216.4 928.7,213.5 914.0,211.5 908.1,213.5 904.2,218.4 902.2,209.5 892.4,209.5 889.4,206.6Z"/><path fill="#c6e2c3" d="M980.5,203.2 1002.5,197.7 1021.3,201.6 1040.0,201.6 1048.8,205.0 1040.0,211.0 1029.0,215.8 1016.6,219.0 999.3,214.2 986.8,209.5Z"/><path fill="#1b5218" d="M952.2,223.6 964.8,214.2 977.3,204.8 986.8,209.5 999.3,214.2 1016.6,219.0 1029.0,215.8 1040.0,211.0 1048.8,205.0 1045.7,204.8 1048.8,195.4 1058.3,193.8 1066.0,201.6 1080.2,205.6 1074.0,214.2 1061.4,220.5 1052.0,223.6 1045.7,228.3 1055.0,230.0 1048.8,236.2 1053.5,245.6 1046.5,254.5 1037.1,260.8 1027.7,262.4 1015.1,262.4 1005.7,257.7 1001.0,251.4 993.5,247.0 985.6,250.2 979.3,251.8 962.0,247.0 959.0,239.3 951.0,231.4Z"/><path fill="#5ea95b" d="M951.0,231.4 959.0,239.3 962.0,247.0 979.3,251.8 985.6,250.2 993.5,247.0 998.2,251.8 992.0,259.7 979.3,259.7 976.2,266.0 963.6,277.0 960.5,291.0 955.8,291.0 948.0,275.4 944.8,262.8 938.5,259.7 940.0,251.8 948.0,244.0Z"/><path fill="#c6e2c3" d="M962.0,246.0 979.3,250.5 978.0,253.0 963.0,249.0Z"/><path fill="#98cb93" d="M980.0,254.0 986.0,253.0 987.0,260.0 981.0,259.0Z"/><path fill="#c6e2c3" d="M963.0,292.0 967.0,292.5 967.5,297.0 964.0,297.0Z"/><path fill="#f3f5f3" d="M993.5,251.8 998.2,251.8 1001.0,251.4 1005.7,257.7 1004.1,265.5 1001.0,270.2 999.4,273.4 998.2,273.8 995.0,269.0 990.3,262.8 992.0,259.7Z"/><path fill="#98cb93" d="M1001.0,270.2 1010.4,265.5 1016.7,273.4 1018.3,281.2 1012.0,282.8 1007.3,281.2 1005.7,292.2 1010.4,301.6 1008.8,303.2 1002.6,289.0 1002.6,279.7Z"/><path fill="#c6e2c3" d="M1005.7,257.7 1015.1,262.4 1017.0,264.0 1024.0,271.0 1016.7,273.4 1010.4,265.5 1004.1,265.5Z"/><path fill="#98cb93" d="M1015.1,262.4 1027.7,262.4 1024.0,268.0 1026.1,271.8 1026.1,284.4 1018.3,290.6 1016.0,286.0 1022.0,282.0 1022.0,273.0 1017.0,264.0Z"/><path fill="#e0efdd" d="M1012.0,282.8 1018.3,281.2 1022.0,282.0 1016.0,288.0 1012.0,287.0Z"/><path fill="#5ea95b" d="M1008.8,303.2 1010.4,301.6 1015.1,308.0 1013.0,310.0Z"/><path fill="#98cb93" d="M996.3,298.5 1005.7,306.4 1015.1,314.2 1019.8,322.0 1016.7,323.6 1005.7,314.2Z"/><path fill="#98cb93" d="M1018.3,324.4 1037.0,328.3 1052.8,330.0 1060.0,331.5 1059.0,333.5 1051.0,332.5 1034.0,331.0 1020.0,327.0Z"/><path fill="#c6e2c3" d="M1061.0,330.0 1068.0,328.5 1072.0,329.5 1066.0,332.5 1061.0,332.5Z"/><path fill="#98cb93" d="M1067.0,309.0 1071.0,308.0 1070.0,313.0 1067.0,314.0Z"/><path fill="#98cb93" d="M1074.0,316.0 1082.0,315.5 1083.0,318.0 1075.0,318.5Z"/><path fill="#f3f5f3" d="M1128.0,325.0 1133.0,327.0 1138.0,330.0 1142.0,334.0 1139.0,334.5 1133.0,331.0 1128.0,328.0Z"/><path fill="#f3f5f3" d="M1113.0,320.0 1120.0,320.5 1119.0,323.0 1113.0,323.0Z"/><path fill="#f3f5f3" d="M1151.0,343.0 1154.0,347.0 1153.0,348.5 1150.5,345.0Z"/><path fill="#f3f5f3" d="M1145.5,354.5 1152.5,360.0 1151.0,361.0 1145.0,356.0Z"/><path fill="#f3f5f3" d="M1177.0,347.0 1181.5,346.5 1181.0,349.0 1177.5,349.0Z"/><path fill="#98cb93" d="M1026.1,308.0 1037.1,301.6 1045.0,297.0 1046.5,304.8 1041.8,317.3 1030.8,319.0 1026.1,314.2Z"/><path fill="#98cb93" d="M1048.0,308.0 1060.0,307.0 1052.0,312.0 1058.0,315.0 1053.0,318.0 1051.0,324.0 1048.0,318.0Z"/><path fill="#c6e2c3" d="M1049.7,270.0 1054.0,272.0 1053.0,284.0 1060.0,287.0 1063.8,298.5 1058.0,295.0 1053.0,290.0 1050.0,282.0Z"/><path fill="#98cb93" d="M1074.8,312.6 1085.0,315.0 1096.8,317.3 1096.8,328.3 1088.0,325.0 1080.0,322.0Z"/><path fill="#f3f5f3" d="M1096.8,317.3 1105.0,320.0 1110.0,326.0 1117.2,334.6 1110.0,333.0 1104.0,329.0 1096.8,328.3Z"/><path fill="#5ea95b" d="M1070.8,239.3 1078.0,234.1 1090.5,230.0 1095.0,224.0 1098.3,220.5 1099.0,227.0 1094.0,233.0 1087.3,235.7 1074.8,242.0Z"/><path fill="#5ea95b" d="M1097.0,213.0 1106.0,214.5 1103.0,219.0 1097.0,219.0Z"/><path fill="#5ea95b" d="M1063.0,226.0 1070.0,226.0 1072.0,233.0 1067.0,236.5 1064.0,232.0Z"/><path fill="#5ea95b" d="M1097.5,192.2 1103.8,203.2 1099.0,214.2 1096.0,204.8Z"/><path fill="#5ea95b" d="M1051.0,254.0 1054.0,254.0 1053.0,260.0 1050.0,259.0Z"/><path fill="#5ea95b" d="M1025.0,265.0 1029.0,265.0 1028.0,269.0 1024.0,268.0Z"/><path fill="#2a6b28" d="M1035.9,360.6 1046.5,355.3 1055.3,348.3 1066.0,342.0 1076.5,336.8 1085.4,337.7 1084.5,343.0 1094.2,348.3 1098.6,335.9 1104.8,343.0 1108.3,355.3 1118.9,364.2 1123.3,373.0 1120.7,383.6 1113.6,394.2 1104.8,396.0 1096.0,394.2 1088.9,387.1 1085.4,383.6 1080.0,380.0 1069.5,380.0 1055.3,383.6 1043.0,387.1 1039.4,381.8 1035.9,371.2Z"/><path fill="#2a6b28" d="M1104.8,401.3 1111.9,401.3 1108.3,406.6Z"/><path fill="#5ea95b" d="M1165.0,387.0 1170.0,392.0 1177.0,394.0 1173.0,399.0 1168.0,402.0 1166.0,396.0Z"/><path fill="#5ea95b" d="M1167.0,401.0 1162.0,406.0 1156.0,411.0 1152.0,412.0 1154.0,408.0 1160.0,403.0Z"/><path fill="#5ea95b" d="M798.3,176.5 804.2,171.6 813.0,167.7 818.9,160.8 828.7,156.9 838.5,154.9 848.3,154.9 858.1,156.9 850.3,159.8 838.5,161.8 830.7,164.7 822.8,169.6 815.0,182.4 809.1,184.3 802.2,182.4Z"/><path fill="#5ea95b" d="M815.0,182.4 822.8,169.6 830.7,164.7 838.5,161.8 837.5,168.6 828.7,173.6 826.7,181.4 820.8,188.3 816.9,189.3Z"/><path fill="#5ea95b" d="M838.5,161.8 848.3,159.8 854.2,167.7 853.2,176.5 843.4,178.5 835.6,175.5 837.5,168.6Z"/><path fill="#5ea95b" d="M806.0,186.5 812.0,186.0 813.0,191.0 807.0,192.0Z"/><path fill="#5ea95b" d="M770.8,182.4 779.6,181.4 783.6,187.3 789.4,196.1 787.5,199.0 776.7,200.0 779.6,195.1 776.7,191.2Z"/><path fill="#2a6b28" d="M781.6,192.2 784.5,191.0 789.4,196.1 787.5,199.0 780.0,199.0Z"/><path fill="#5ea95b" d="M763.9,193.2 773.7,191.2 773.7,197.1 764.9,198.1Z"/><path fill="#318a34" d="M776.7,206.0 785.5,202.0 796.3,198.1 802.2,202.0 801.2,208.9 799.3,212.8 799.3,216.7 790.4,217.7 785.5,214.8 784.5,208.9Z"/><path fill="#98cb93" d="M796.3,196.1 801.2,194.2 802.2,201.0 796.3,198.1Z"/><path fill="#2a6b28" d="M801.2,194.2 807.1,192.2 817.9,193.2 818.9,199.0 815.0,202.0 815.0,205.9 805.1,206.9 801.2,205.0 802.2,201.0Z"/><path fill="#5ea95b" d="M818.9,193.2 836.5,193.2 838.5,201.0 828.7,203.0 818.9,201.0Z"/><path fill="#98cb93" d="M815.0,200.0 818.9,201.0 828.7,203.0 823.8,206.0 817.0,206.0 815.0,205.9Z"/><path fill="#98cb93" d="M801.2,205.0 805.1,206.9 815.0,205.9 817.0,206.0 823.8,206.0 826.7,206.9 823.8,210.8 804.2,210.8Z"/><path fill="#318a34" d="M799.3,211.8 804.2,210.8 815.0,209.9 815.0,213.8 821.8,220.7 826.7,224.6 823.8,227.5 818.9,222.6 809.1,216.7 802.2,214.8Z"/><path fill="#318a34" d="M767.9,216.7 787.5,217.7 790.4,218.7 785.5,224.6 781.6,230.0 773.5,230.0 768.8,228.3Z"/><path fill="#98cb93" d="M767.9,216.7 772.0,217.3 772.0,228.5 768.8,228.3 766.0,224.0Z"/><path fill="#98cb93" d="M824.8,206.9 833.6,206.9 834.6,206.9 846.4,206.9 848.3,213.8 838.5,213.8 833.6,210.8 823.8,210.8Z"/><path fill="#c6e2c3" d="M838.5,196.1 860.0,197.1 868.0,199.0 872.0,205.0 869.0,210.0 860.0,211.5 848.3,210.0 838.5,203.0Z"/><path fill="#c6e2c3" d="M839.5,189.3 854.2,190.2 855.2,196.1 839.5,196.1Z"/><path fill="#98cb93" d="M836.5,182.0 846.0,182.5 847.3,189.3 838.0,190.5 836.5,187.0Z"/><path fill="#98cb93" d="M838.5,214.8 847.3,214.8 847.3,220.7 838.5,220.7Z"/><path fill="#c6e2c3" d="M832.6,220.7 838.5,220.7 839.0,225.0 836.0,229.0 832.0,226.0Z"/><path fill="#e9a321" d="M407.6,340.5 409.0,340.5 409.0,341.5 407.6,341.5Z"/><path fill="#e9a321" d="M402.1,357.2 403.5,357.2 403.5,358.2 402.1,358.2Z"/><path fill="#e9a321" d="M454.3,347.5 455.7,347.5 455.7,348.5 454.3,348.5Z"/><path fill="#e9a321" d="M459.3,349.5 460.7,349.5 460.7,350.5 459.3,350.5Z"/><path fill="#e9a321" d="M479.3,330.5 480.7,330.5 480.7,331.5 479.3,331.5Z"/><path fill="#e9a321" d="M482.3,332.5 483.7,332.5 483.7,333.5 482.3,333.5Z"/></g><g fill="none" stroke="#e9a321" stroke-width="1.3" stroke-linejoin="round"><path d="M783.3,233.9 784.3,240.8 769.5,248.6 767.6,253.5 757.8,254.5"/><path d="M805.8,231 808.8,240.8 809.8,257.4 809.8,260.4"/><path d="M841.2,262.3 841.2,266.3 839.2,267.3"/><path d="M864,262.3 863.9,280.6 860,293.4 863.9,301.3 875.7,303.2"/><path d="M844.3,298.3 852.1,302.2 863.9,301.3"/><path d="M862.9,302.2 861.9,313 854.1,312 854.1,303.2"/><path d="M861.9,313 872.7,320.9"/><path d="M852.1,302.2 851.1,318.9 852.1,328.7 863.9,335.6 873.7,334.6"/><path d="M838.4,334.6 850.1,330.7 852.1,328.7"/><path d="M817.8,285.5 819.7,296.3 819.7,305.2 809,305.2"/><path d="M769.5,289.8 780.3,289.8 780.3,299.6"/><path d="M782.3,287.9 782.3,299.6"/><path d="M790.1,286.9 788.2,298.7"/><path d="M813,348.8 836.5,348.8 842.8,350.4 858.5,347.3"/><path d="M831.8,350.4 830.2,370.8 825.5,375.5"/><path d="M842.8,350.4 849,359.8 852.2,361.4"/><path d="M858.5,347.3 857,358.3 852.2,361.4"/><path d="M860,335 864,353.6"/><path d="M826.6,306.2 827.6,302.2"/><path d="M824.6,317 834.4,326.8"/><path d="M863.9,280.6 879.6,280.6 882.5,286.5"/></g><g fill="#0b4a0b"><rect x="381.5" y="114" width="23" height="67" rx="11.5"/><rect x="370.5" y="137" width="46" height="22" rx="11"/><path d="M389 187.5 H397 L404.5 195 V247 L397 254.5 H389 L381.5 247 V195Z"/></g><g fill="#fff"><path d="M393 119.5 L399.5 131 L386.5 131Z"/><path d="M393 176 L399.5 164.5 L386.5 164.5Z"/><path d="M374.7 147.5 L386.5 141 L386.5 154Z"/><path d="M411.5 147.5 L399.5 141 L399.5 154Z"/><rect x="387" y="199.4" width="12" height="2.3"/><rect x="391.85" y="194.5" width="2.3" height="12"/><rect x="387" y="241.3" width="12" height="2.2"/></g><g fill="none" stroke="#5f7fc6" stroke-width="1"><circle cx="393" cy="221.2" r="9.8"/><ellipse cx="393" cy="221.2" rx="5" ry="9.8"/><path d="M383.5 221.2 H402.5 M385 216 H401 M385 226.4 H401 M393 211.5 V231"/></g></svg>
</body></html>
